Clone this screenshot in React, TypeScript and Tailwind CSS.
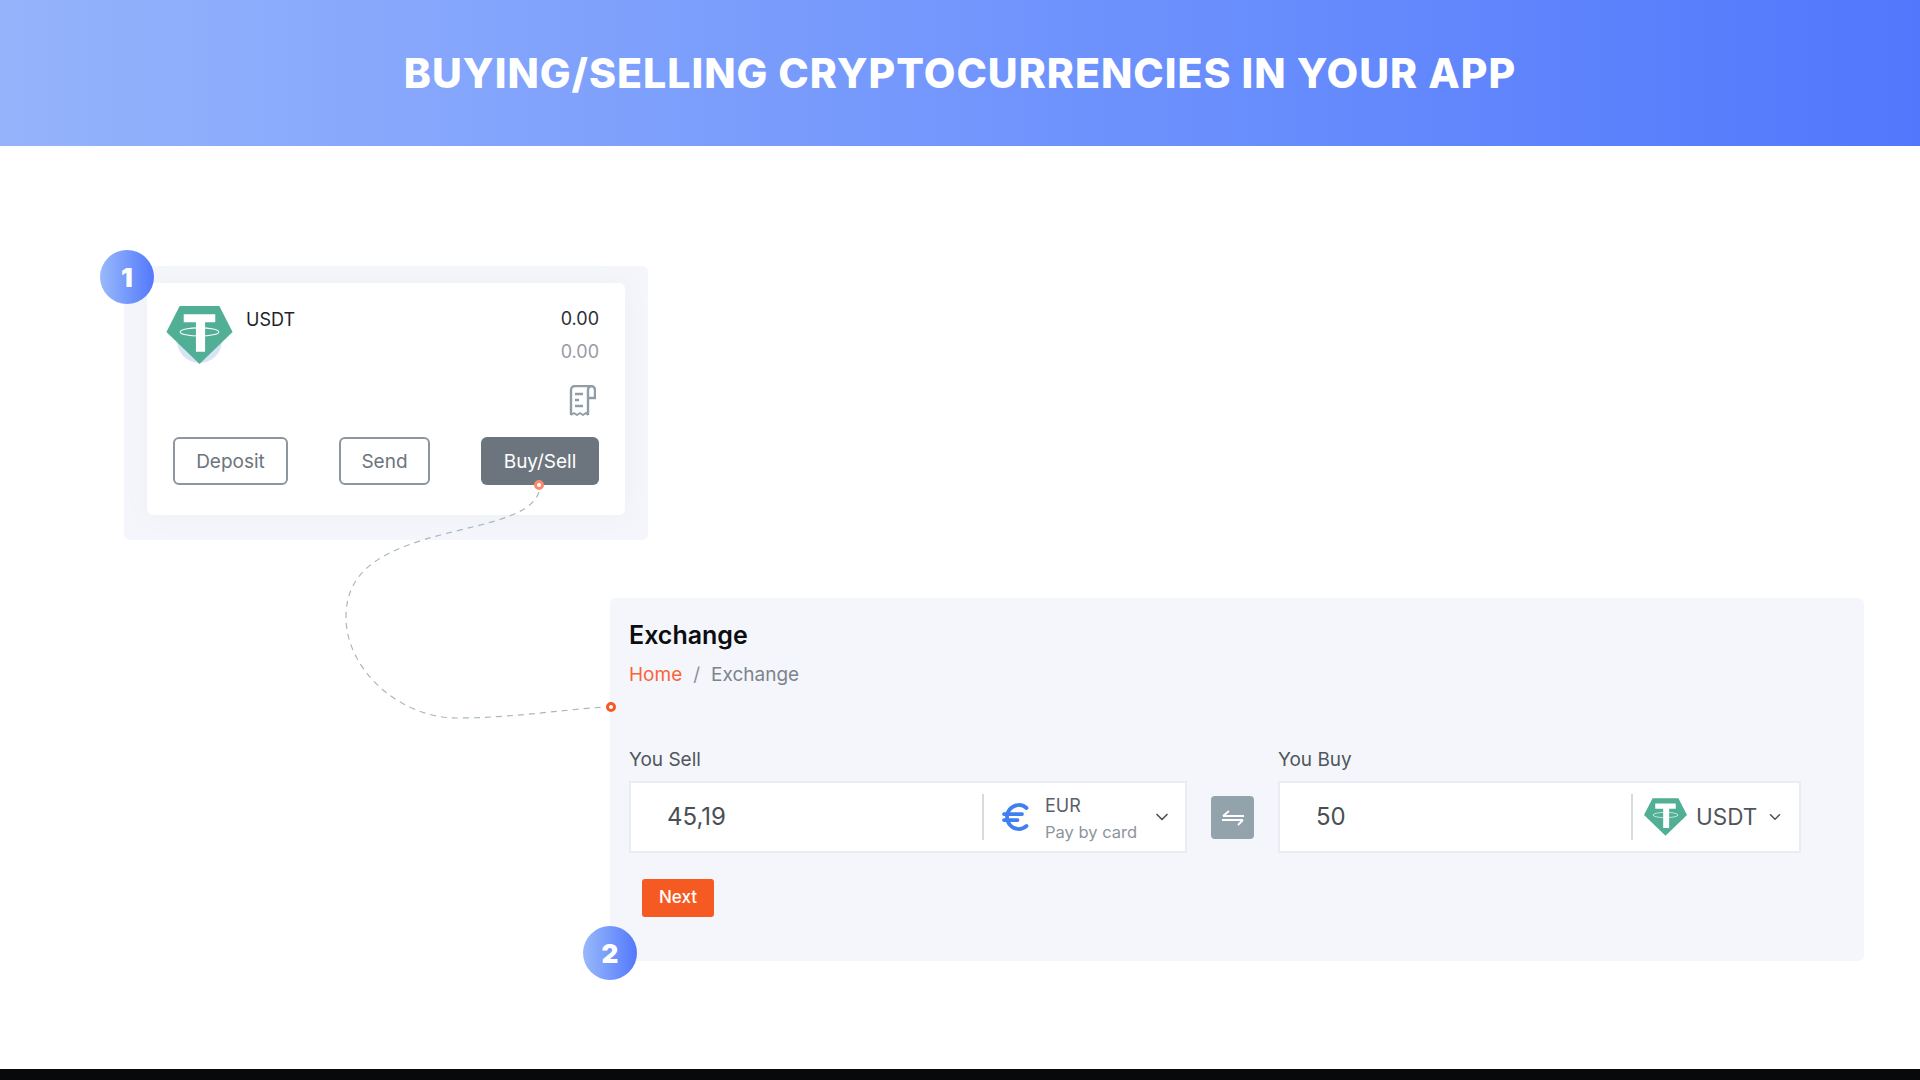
import { ChevronDown, Euro } from "lucide-react";

function Tether({ className, halo }: { className: string; halo?: boolean }) {
  return (
    <svg viewBox="0 0 65 57" className={className}>
      {halo && <circle cx="32.5" cy="34" r="22" fill="#d8e4f6" />}
      <polygon points="13,0 52,0 65,25.5 32.5,57 0,25.5" fill="#50af95" />
      <path d="M17 8H48V16H38V45H29V16H17Z" fill="#fff" />
      <ellipse cx="32.5" cy="25.5" rx="19" ry="4" fill="none" stroke="#fff" strokeWidth="1" />
    </svg>
  );
}

function Badge({ n, className }: { n: string; className: string }) {
  return (
    <div
      className={`absolute flex h-[54px] w-[54px] items-center justify-center rounded-full bg-gradient-to-r from-[#9ab8fa] to-[#5478fb] text-[26px] font-black text-white ${className}`}
    >
      {n}
    </div>
  );
}

function Receipt() {
  return (
    <svg viewBox="0 0 30 31" className="h-[31px] w-[30px]" fill="none" stroke="#8f9ea6" strokeWidth="2.4">
      <path d="M22 13h7V5a4 4 0 0 0-4-4H9a4 4 0 0 0-4 4v25" />
      <path d="M22 30V5a4 4 0 0 1 3-4" />
      <path d="M5 30l3-2 3 2 3-2 3 2 3-2 2 2" strokeWidth="1.8" />
      <path d="M9 9h8M9 15h4M9 21h8" />
    </svg>
  );
}

function SwapIcon() {
  return (
    <svg viewBox="0 0 24 16" className="h-4 w-6" fill="none" stroke="#fff" strokeWidth="1.8">
      <path d="M2 6H23M2 6L8 1" />
      <path d="M1 10H22M22 10L17 15" />
    </svg>
  );
}

export default function App() {
  return (
    <div className="relative flex h-[1080px] w-[1920px] flex-col overflow-hidden bg-white font-['Inter',sans-serif]">
      <header className="flex h-[146px] shrink-0 items-center justify-center bg-gradient-to-r from-[#95b3fb] to-[#5277fc] pt-[1px]">
        <h1 className="text-[41px] font-extrabold tracking-[1px] text-white">BUYING/SELLING CRYPTOCURRENCIES IN YOUR APP</h1>
      </header>

      <main className="flex flex-1 flex-col">
        <section className="relative ml-[124px] mt-[120px] h-[274px] w-[524px] rounded-md bg-[#f4f6fb] pl-[23px] pt-[17px]">
          <Badge n="1" className="-left-6 -top-4" />
          <div className="flex h-[232px] w-[478px] flex-col rounded-md bg-white px-[26px] shadow-[0_0_24px_rgba(120,130,160,0.06)]">
            <div className="flex">
              <Tether halo className="-ml-[7px] mt-[23px] h-[58px] w-[67px]" />
              <span className="ml-[13px] mt-[27px] text-[18px] leading-5 text-[#20242a]">USDT</span>
              <div className="ml-auto mt-[19px] flex flex-col items-end text-[18px] leading-[33px]">
                <span className="text-[#2a2f36]">0.00</span>
                <span className="text-[#969ca3]">0.00</span>
              </div>
            </div>
            <div className="mt-[17px] flex justify-end pr-[3px]">
              <Receipt />
            </div>
            <div className="mt-[21px] flex justify-between text-[19px] leading-none">
              <button className="h-[48px] w-[115px] rounded-[6px] border-2 border-[#8d969e] bg-white text-[#6c757d]">Deposit</button>
              <button className="h-[48px] w-[91px] rounded-[6px] border-2 border-[#8d969e] bg-white text-[#6c757d]">Send</button>
              <button className="h-[48px] w-[118px] rounded-[6px] bg-[#6c757d] text-white">Buy/Sell</button>
            </div>
          </div>
        </section>

        <section className="relative ml-[610px] mt-[58px] h-[363px] w-[1254px] rounded-md bg-[#f4f6fb] pl-[19px] pt-[21px]">
          <Badge n="2" className="-left-[27px] top-[328px]" />
          <h2 className="text-[25px] font-semibold leading-8 text-[#0b0d10]">Exchange</h2>
          <div className="mt-[12px] flex items-center text-[19px] leading-6">
            <span className="text-[#f7653b]">Home</span>
            <span className="mx-[11px] text-[#8b929a]">/</span>
            <span className="text-[#7c848c]">Exchange</span>
          </div>
          <div className="mt-[61px] flex items-end">
            <div className="w-[558px]">
              <div className="mb-[9px] text-[19px] leading-6 text-[#50565c]">You Sell</div>
              <div className="flex h-[72px] items-center border-2 border-[#e9ecf2] bg-white">
                <div className="w-[351px] pl-[36px] text-[24px] text-[#4a4f55]">45,19</div>
                <div className="h-[46px] w-[2px] bg-[#d7dbe0]" />
                <Euro className="ml-[14px] h-[36px] w-[36px] text-[#3f7ff0]" strokeWidth={2.5} />
                <div className="ml-[11px] flex flex-col pt-[4px]">
                  <span className="text-[18px] leading-[27px] text-[#5b6168]">EUR</span>
                  <span className="text-[16.5px] leading-[27px] text-[#8d959c]">Pay by card</span>
                </div>
                <ChevronDown className="ml-auto mr-[13px] h-5 w-5 text-[#4a525a]" strokeWidth={2} />
              </div>
            </div>
            <button className="mx-[24px] mb-[14px] flex h-[43px] w-[43px] items-center justify-center rounded-[4px] bg-[#93a3ac]">
              <SwapIcon />
            </button>
            <div className="w-[523px]">
              <div className="mb-[9px] text-[19px] leading-6 text-[#50565c]">You Buy</div>
              <div className="flex h-[72px] items-center border-2 border-[#e9ecf2] bg-white">
                <div className="w-[351px] pl-[36px] text-[24px] text-[#4a4f55]">50</div>
                <div className="h-[46px] w-[2px] bg-[#d7dbe0]" />
                <Tether className="ml-[11px] h-[42px] w-[43px]" />
                <span className="ml-[9px] text-[22.5px] text-[#4f555b]">USDT</span>
                <ChevronDown className="ml-auto mr-[15px] h-[18px] w-[18px] text-[#4a525a]" strokeWidth={2} />
              </div>
            </div>
          </div>
          <button className="ml-[13px] mt-[26px] h-[38px] w-[72px] rounded-[3px] bg-[#f55a22] text-[17px] font-medium text-white">Next</button>
        </section>
      </main>

      <div className="h-[11px] shrink-0 bg-[#08090b]" />

      <svg className="pointer-events-none absolute left-0 top-0" width="1920" height="1080" fill="none">
        <path
          d="M539 492C530 520 470 525 423 540C375 555 346 575 346 617C346 670 400 718 457 718C510 718 560 710 605 707"
          stroke="#a9b8bd"
          strokeWidth="1.2"
          strokeDasharray="6 5"
        />
        <circle cx="539" cy="485" r="3.5" fill="#fff" stroke="#fb8a6c" strokeWidth="3" />
        <circle cx="611" cy="707" r="3.5" fill="#fff" stroke="#f55a22" strokeWidth="3" />
      </svg>
    </div>
  );
}
